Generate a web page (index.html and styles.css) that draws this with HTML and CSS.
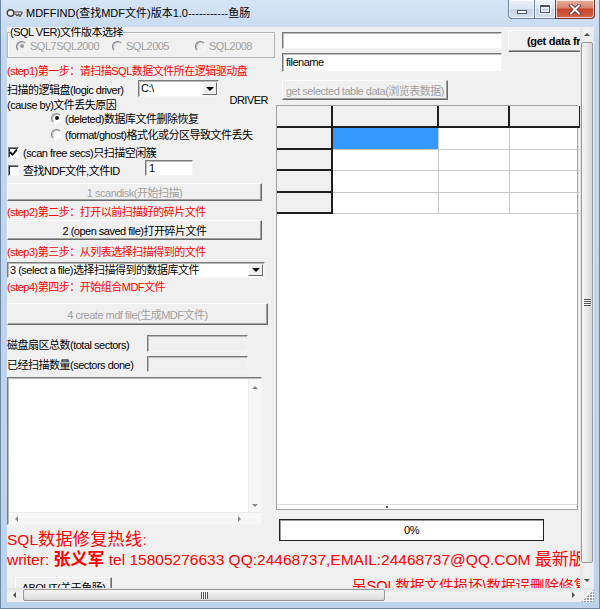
FILE: index.html
```html
<!DOCTYPE html>
<html>
<head>
<meta charset="UTF-8">
<title>MDFFIND</title>
<link rel="stylesheet" href="styles.css">
</head>
<body>
<div class="window">
    <div class="titlebar">
        <svg class="app-icon" width="17" height="10" viewBox="0 0 17 10">
            <circle cx="4.5" cy="5" r="3.2" fill="#f4f4f4" stroke="#3c3c3c" stroke-width="1.4"/>
            <path d="M7.7 4h8.3v2h-1.2v2.2h-1.8v-2.2h-1v1.6h-1.8v-1.6h-2.5z" fill="#d9d9d9" stroke="#3c3c3c" stroke-width="0.9"/>
        </svg>
        <span class="title">MDFFIND(查找MDF文件)版本1.0-----------鱼肠</span>
        <div class="caption">
            <span class="cap cap-min"><i></i></span>
            <span class="cap cap-max"><i></i></span>
            <span class="cap cap-close">
                <svg width="14" height="11" viewBox="0 0 14 11">
                    <path d="M3 1.5l8 8M11 1.5l-8 8" stroke="#5a2a20" stroke-width="3.6" stroke-linecap="square"/>
                    <path d="M3 1.5l8 8M11 1.5l-8 8" stroke="#fff" stroke-width="2" stroke-linecap="square"/>
                </svg>
            </span>
        </div>
    </div>

    <div class="frame-main">
        <div class="client">
            <div class="columns">
                <!-- left: scan steps -->
                <div class="left">
                    <fieldset class="group">
                        <legend>(SQL VER)文件版本选择</legend>
                        <div class="radio-row">
                            <label class="opt off w1"><span class="radio on"></span>SQL7SQL2000</label>
                            <label class="opt off w2"><span class="radio"></span>SQL2005</label>
                            <label class="opt off"><span class="radio"></span>SQL2008</label>
                        </div>
                    </fieldset>

                    <div class="step s1">(step1)第一步：请扫描SQL数据文件所在逻辑驱动盘</div>

                    <div class="field-row logic">
                        <span class="field-label l131">扫描的逻辑盘(logic driver)</span>
                        <div class="combo c-drive"><span class="combo-text">C:\</span><span class="drop"></span></div>
                    </div>

                    <div class="cause-row">
                        <span class="cause">(cause by)文件丢失原因</span>
                        <span class="driver">DRIVER</span>
                    </div>

                    <div class="opt-row first"><span class="radio on"></span>(deleted)数据库文件删除恢复</div>
                    <div class="opt-row second"><span class="radio"></span>(format/ghost)格式化或分区导致文件丢失</div>

                    <div class="check-row scan">
                        <span class="check">
                            <svg width="9" height="9" viewBox="0 0 9 9"><path d="M1 4.2l2.4 2.5L8 1.6" fill="none" stroke="#000" stroke-width="1.7"/></svg>
                        </span>(scan free secs)只扫描空闲簇
                    </div>
                    <div class="check-row ndf">
                        <span class="ndf-label"><span class="check"></span>查找NDF文件,文件ID</span>
                        <div class="textbox id-box">1</div>
                    </div>

                    <div class="btn disabled b-scan">1 scandisk(开始扫描)</div>
                    <div class="step s2">(step2)第二步：打开以前扫描好的碎片文件</div>
                    <div class="btn b-open">2 (open saved file)打开碎片文件</div>
                    <div class="step s3">(step3)第三步：从列表选择扫描得到的文件</div>
                    <div class="combo c-file"><span class="combo-text">3 (select a file)选择扫描得到的数据库文件</span><span class="drop"></span></div>
                    <div class="step s4">(step4)第四步：开始组合MDF文件</div>
                    <div class="btn disabled b-create">4 create mdf file(生成MDF文件)</div>

                    <div class="field-row info first-info">
                        <span class="field-label l140">磁盘扇区总数(total sectors)</span>
                        <div class="textbox readonly count-box"></div>
                    </div>
                    <div class="field-row info second-info">
                        <span class="field-label l140">已经扫描数量(sectors done)</span>
                        <div class="textbox readonly count-box"></div>
                    </div>

                    <div class="log">
                        <div class="log-main">
                            <div class="log-text"></div>
                            <div class="log-vbar"><span class="tri up"></span><span class="tri down"></span></div>
                        </div>
                        <div class="log-hbar"><span class="tri left"></span><span class="tri right"></span></div>
                    </div>

                    <div class="hotline">SQL<span class="big-cjk">数据修复热线</span>:</div>
                </div>

                <!-- right: table browser -->
                <div class="right">
                    <div class="top-row">
                        <div class="textbox wide top-box"></div>
                        <div class="btn get-data">(get data from table)</div>
                    </div>
                    <div class="textbox wide name-box">filename</div>
                    <div class="btn disabled b-browse">get selected table data(浏览表数据)</div>

                    <div class="grid">
                        <div class="grid-row head">
                            <span class="hc"></span><span class="hc"></span><span class="hc"></span><span class="hc"></span>
                        </div>
                        <div class="grid-row r22">
                            <span class="rh"></span><span class="dc sel"></span><span class="dc"></span><span class="dc"></span>
                        </div>
                        <div class="grid-row r21">
                            <span class="rh"></span><span class="dc"></span><span class="dc"></span><span class="dc"></span>
                        </div>
                        <div class="grid-row r22">
                            <span class="rh"></span><span class="dc"></span><span class="dc"></span><span class="dc"></span>
                        </div>
                        <div class="grid-row r21">
                            <span class="rh"></span><span class="dc"></span><span class="dc"></span><span class="dc"></span>
                        </div>
                        <div class="grid-blank"></div>
                        <div class="grid-foot"><span class="foot-dot"></span></div>
                    </div>

                    <div class="progress">0%</div>
                </div>
            </div>

            <div class="writer">writer: <span class="name">张义军</span> tel 15805276633 QQ:24468737,EMAIL:24468737@QQ.COM <span class="big-cjk">最新版本下载</span></div>

            <div class="bottom-row">
                <div class="btn about">ABOUT(关于鱼肠)</div>
                <div class="note">另SQL数据文件损坏\数据误删除修复</div>
            </div>
        </div>

        <div class="vscroll">
            <span class="sb-btn"><span class="tri up"></span></span>
            <span class="sb-thumb v"><i class="grip-h"></i></span>
            <span class="sb-track"></span>
            <span class="sb-btn"><span class="tri down"></span></span>
        </div>
    </div>

    <div class="hscroll">
        <span class="sb-btn"><span class="tri left"></span></span>
        <span class="sb-thumb h"><i class="grip-v"></i></span>
        <span class="sb-track"></span>
        <span class="sb-btn"><span class="tri right"></span></span>
        <span class="size-grip"></span>
    </div>
</div>
</body>
</html>
```

FILE: styles.css
```css
* {
    box-sizing: border-box;
}

body {
    margin: 0;
    background: #bed3ec;
    font: 11px "Liberation Sans", "Noto Sans CJK SC", sans-serif;
    letter-spacing: -0.5px;
    color: #000;
}

/* window frame */
.window {
    width: 600px;
    height: 609px;
    background: linear-gradient(#d6e5f6, #c3d7ee 40px, #bdd2eb);
    border: 1px solid #6d87a6;
    border-top: none;
    padding: 0 5px 6px 6px;
    overflow: hidden;
}

.titlebar {
    height: 27px;
    display: flex;
    align-items: flex-start;
}
.app-icon {
    margin: 8px 0 0 -1px;
}
.title {
    margin: 6px 0 0 3px;
    line-height: 14px;
    letter-spacing: 0;
    white-space: nowrap;
}
.caption {
    display: flex;
    margin-left: auto;
    margin-right: -1px;
}
.cap {
    height: 19px;
    display: flex;
    align-items: center;
    justify-content: center;
    border: 1px solid #6a7f9c;
    border-top: none;
    background: linear-gradient(#eef3fa, #d7e3f1 50%, #c4d4e7 51%, #d3e0ef);
    box-shadow: inset 0 0 0 1px rgba(255, 255, 255, 0.7);
}
.cap-min {
    width: 26px;
    border-radius: 0 0 0 4px;
    border-right: none;
}
.cap-max {
    width: 21px;
    border-right: none;
}
.cap-close {
    width: 40px;
    border-radius: 0 0 4px 0;
    border-color: #7a3327;
    background: linear-gradient(#eab0a2, #d98270 45%, #c8442a 50%, #d2624a);
}
.cap-min i {
    width: 10px;
    height: 4px;
    margin-top: 6px;
    background: #fff;
    border: 1px solid #44526a;
}
.cap-max i {
    width: 10px;
    height: 8px;
    border: 1px solid #44526a;
    border-top-width: 2px;
    box-shadow: 0 0 0 1px #fff, inset 0 0 0 1px #fff;
}

.frame-main {
    display: flex;
    height: 561px;
}

.client {
    width: 573px;
    height: 561px;
    background: #f0f0f0;
    overflow: hidden;
}

.columns {
    display: flex;
    align-items: flex-start;
    height: 523px;
}

.left {
    width: 269px;
    flex-shrink: 0;
}

.right {
    width: 304px;
    flex-shrink: 0;
}

/* classic controls */
.textbox {
    height: 17px;
    flex-shrink: 0;
    background: #fff;
    border: 1px solid;
    border-color: #7a7a7a #f4f4f4 #f4f4f4 #7a7a7a;
    box-shadow: inset 1px 1px #b9b9b9;
    padding: 0 3px;
    line-height: 15px;
    white-space: nowrap;
}
.textbox.readonly {
    background: #f0f0f0;
}

.btn {
    display: flex;
    flex-shrink: 0;
    align-items: center;
    justify-content: center;
    background: #f0f0f0;
    border: 1px solid;
    border-color: #fff #6a6a6a #6a6a6a #fff;
    box-shadow: inset -1px -1px #a0a0a0;
    white-space: nowrap;
}
.btn.disabled {
    color: #a0a0a0;
}

.combo {
    display: flex;
    flex-shrink: 0;
    background: #fff;
    border: 1px solid;
    border-color: #7a7a7a #f4f4f4 #f4f4f4 #7a7a7a;
    box-shadow: inset 1px 1px #b9b9b9;
}
.combo-text {
    flex: 1;
    padding: 0 2px;
    line-height: 15px;
    white-space: nowrap;
    overflow: hidden;
}
.drop {
    width: 15px;
    margin: 1px 1px 1px 0;
    display: flex;
    align-items: center;
    justify-content: center;
    background: #f0f0f0;
    border: 1px solid;
    border-color: #fff #6a6a6a #6a6a6a #fff;
}
.drop::after {
    content: "";
    border-top: 4px solid #000;
    border-left: 4px solid transparent;
    border-right: 4px solid transparent;
}

.radio {
    width: 11px;
    height: 11px;
    flex-shrink: 0;
    display: inline-flex;
    align-items: center;
    justify-content: center;
    margin-right: 3px;
    border-radius: 50%;
    border: 1px solid;
    border-color: #808080 #f8f8f8 #f8f8f8 #808080;
    background: #fff;
    box-shadow: inset 1px 1px #c4c4c4;
}
.radio.on::after {
    content: "";
    width: 4px;
    height: 4px;
    border-radius: 50%;
    background: #111;
}
.off .radio {
    background: #f0f0f0;
}
.off .radio.on::after {
    background: #9a9a9a;
}

.check {
    width: 11px;
    height: 11px;
    flex-shrink: 0;
    display: inline-flex;
    align-items: center;
    justify-content: center;
    margin: 0 4px 0 1px;
    background: #fff;
    border: 1px solid;
    border-color: #808080 #f8f8f8 #f8f8f8 #808080;
    box-shadow: inset 1px 1px #404040;
}

.tri {
    display: block;
    width: 0;
    height: 0;
}
.tri.up {
    border-bottom: 3px solid #8a8a8a;
    border-left: 3px solid transparent;
    border-right: 3px solid transparent;
}
.tri.down {
    border-top: 3px solid #8a8a8a;
    border-left: 3px solid transparent;
    border-right: 3px solid transparent;
}
.tri.left {
    border-right: 3px solid #8a8a8a;
    border-top: 3px solid transparent;
    border-bottom: 3px solid transparent;
}
.tri.right {
    border-left: 3px solid #8a8a8a;
    border-top: 3px solid transparent;
    border-bottom: 3px solid transparent;
}

/* left column rows */
.group {
    margin: 0;
    width: 268px;
    height: 31px;
    padding: 2px 0 0 8px;
    border: 1px solid #b4b4b4;
    box-shadow: inset 1px 1px #fff;
}
.group legend {
    padding: 0;
    margin-left: -6px;
    line-height: 11px;
    background: #f0f0f0;
}
.radio-row {
    display: flex;
    height: 12px;
    align-items: center;
}
.opt {
    display: flex;
    align-items: center;
    white-space: nowrap;
}
.opt.off {
    color: #a0a0a0;
}
.w1 {
    width: 96px;
}
.w2 {
    width: 83px;
}

.step {
    height: 14px;
    line-height: 14px;
    color: #ff0000;
    white-space: nowrap;
}
.s1 {
    margin-top: 6px;
}
.s2 {
    margin-top: 4px;
}
.s3 {
    margin-top: 5px;
}
.s4 {
    margin-top: 2px;
}

.field-row {
    display: flex;
    align-items: center;
    height: 17px;
}
.field-label {
    flex-shrink: 0;
    white-space: nowrap;
}
.l131 {
    width: 131px;
}
.l140 {
    width: 140px;
}
.logic {
    margin-top: 2px;
}
.c-drive {
    width: 81px;
    height: 17px;
}

.cause-row {
    display: flex;
    height: 17px;
    margin-top: -3px;
}
.cause {
    align-self: flex-end;
    line-height: 12px;
    white-space: nowrap;
}
.driver {
    margin: 0 8px 0 auto;
    line-height: 12px;
}

.opt-row {
    display: flex;
    align-items: center;
    height: 14px;
    padding-left: 44px;
    white-space: nowrap;
}
.opt-row .radio {
    margin-right: 3px;
}
.opt-row.second {
    margin-top: 2px;
}

.check-row {
    display: flex;
    align-items: center;
    white-space: nowrap;
}
.scan {
    height: 14px;
    margin-top: 4px;
}
.ndf {
    height: 17px;
    margin-top: 1px;
    align-items: flex-start;
}
.ndf-label {
    width: 138px;
    flex-shrink: 0;
    display: flex;
    align-items: center;
    height: 17px;
    padding-top: 3px;
}
.id-box {
    width: 48px;
    height: 16px;
}

.b-scan {
    width: 255px;
    height: 18px;
    margin-top: 6px;
}
.b-open {
    width: 255px;
    height: 20px;
    margin-top: 1px;
}
.c-file {
    width: 258px;
    height: 16px;
    margin-top: 3px;
}
.c-file .combo-text {
    line-height: 14px;
}
.b-create {
    width: 261px;
    height: 22px;
    margin-top: 9px;
}

.first-info {
    margin-top: 10px;
}
.second-info {
    margin-top: 3px;
}
.count-box {
    width: 101px;
    height: 17px;
}
.second-info .count-box {
    height: 16px;
}

.log {
    width: 255px;
    height: 148px;
    margin-top: 5px;
    display: flex;
    flex-direction: column;
    background: #fff;
    border: 1px solid;
    border-color: #7a7a7a #f4f4f4 #f4f4f4 #7a7a7a;
    box-shadow: inset 1px 1px #b9b9b9;
    padding: 1px 0 0 1px;
}
.log-main {
    flex: 1;
    display: flex;
}
.log-text {
    flex: 1;
}
.log-vbar {
    width: 13px;
    display: flex;
    flex-direction: column;
    justify-content: space-between;
    align-items: center;
    padding: 7px 0 5px;
    background: #f7f7f7;
    border-left: 1px solid #ececec;
}
.log-hbar {
    height: 12px;
    display: flex;
    justify-content: space-between;
    align-items: center;
    padding: 0 20px 0 6px;
    background: #f7f7f7;
    border-top: 1px solid #ececec;
}

.hotline {
    margin-top: 5px;
    height: 20px;
    font-size: 15.5px;
    letter-spacing: 0;
    line-height: 20px;
    color: #ff0000;
    white-space: nowrap;
}
.big-cjk {
    font-size: 17px;
}
.hotline .big-cjk {
    letter-spacing: 0.4px;
}

/* right column */
.top-row {
    display: flex;
    align-items: flex-start;
    height: 22px;
    margin-top: 3px;
}
.wide {
    width: 220px;
    margin-left: 6px;
}
.top-box {
    margin-top: 2px;
}
.get-data {
    width: 130px;
    height: 22px;
    margin-left: 6px;
    justify-content: flex-start;
    padding-left: 18px;
    font-weight: bold;
    letter-spacing: -0.3px;
}
.name-box {
    height: 19px;
    margin-top: 1px;
    line-height: 17px;
}
.b-browse {
    width: 166px;
    height: 20px;
    margin: 8px 0 0 6px;
}

.grid {
    width: 302px;
    height: 405px;
    margin-top: 5px;
    display: flex;
    flex-direction: column;
    background: #fff;
    border: 1px solid #a0a0a0;
}
.grid-row {
    display: grid;
    grid-template-columns: 56px 106px 71px 71px;
}
.head {
    height: 22px;
}
.r22 {
    height: 22px;
}
.r21 {
    height: 21px;
}
.hc,
.rh {
    background: #f0f0f0;
    border-right: 2px solid #1e1e1e;
    border-bottom: 2px solid #1e1e1e;
}
.dc {
    border-right: 1px solid #c8c8c8;
    border-bottom: 1px solid #c8c8c8;
}
.dc.sel {
    background: #3399ff;
}
.grid-blank {
    flex: 1;
    border-bottom: 1px solid #dcdcdc;
}
.grid-foot {
    height: 4px;
    padding: 1px 0 0 109px;
    background: #fff;
}
.foot-dot {
    display: block;
    width: 2px;
    height: 2px;
    background: #606060;
}

.progress {
    width: 265px;
    height: 22px;
    margin: 9px 0 0 3px;
    display: flex;
    align-items: center;
    justify-content: center;
    background: #fff;
    border: 1px solid #222;
    box-shadow: inset 1px 1px #9a9a9a;
}

/* bottom text */
.writer {
    height: 20px;
    font-size: 15.5px;
    letter-spacing: 0;
    line-height: 20px;
    color: #ff0000;
    white-space: nowrap;
}
.writer .name {
    font-size: 17px;
    font-weight: bold;
}

.bottom-row {
    display: flex;
    align-items: flex-start;
    margin-top: 7px;
    height: 20px;
    white-space: nowrap;
}
.about {
    width: 97px;
    height: 20px;
    margin-left: 8px;
}
.note {
    margin: 0 0 0 240px;
    font-size: 14.5px;
    letter-spacing: 0;
    line-height: 18px;
    color: #ff0000;
}

/* window scrollbars */
.vscroll,
.hscroll {
    display: flex;
    background: linear-gradient(90deg, #e3e3e3, #f2f2f2 40%, #ececec);
}
.vscroll {
    width: 14px;
    flex-direction: column;
}
.hscroll {
    height: 14px;
    background: linear-gradient(#e3e3e3, #f2f2f2 40%, #ececec);
}
.sb-btn {
    width: 14px;
    height: 15px;
    flex-shrink: 0;
    display: flex;
    align-items: center;
    justify-content: center;
}
.hscroll .sb-btn {
    height: 14px;
}
.sb-btn .tri.up {
    border-bottom-color: #505050;
}
.sb-btn .tri.down {
    border-top-color: #505050;
}
.sb-btn .tri.left {
    border-right-color: #505050;
}
.sb-btn .tri.right {
    border-left-color: #505050;
}
.sb-thumb {
    display: flex;
    align-items: center;
    justify-content: center;
    border: 1px solid #979797;
    border-radius: 2px;
}
.sb-thumb.v {
    height: 521px;
    margin: 0 1px;
    background: linear-gradient(90deg, #f6f6f6, #e9e9e9 45%, #d6d6d6);
}
.sb-thumb.h {
    width: 362px;
    margin: 1px 0 1px 2px;
    background: linear-gradient(#f6f6f6, #e9e9e9 45%, #d6d6d6);
}
.sb-track {
    flex: 1;
}
.grip-h {
    width: 7px;
    height: 7px;
    background: repeating-linear-gradient(#555 0 1px, #fff 1px 2px);
}
.grip-v {
    width: 7px;
    height: 7px;
    background: repeating-linear-gradient(90deg, #555 0 1px, #fff 1px 2px);
}
.size-grip {
    width: 14px;
    height: 14px;
    flex-shrink: 0;
    background:
        radial-gradient(circle at 2px 2px, #9a9a9a 1px, transparent 1.5px) 0 0 / 3px 3px;
    background-color: #f0f0f0;
    clip-path: polygon(100% 10%, 100% 100%, 10% 100%);
}
```
